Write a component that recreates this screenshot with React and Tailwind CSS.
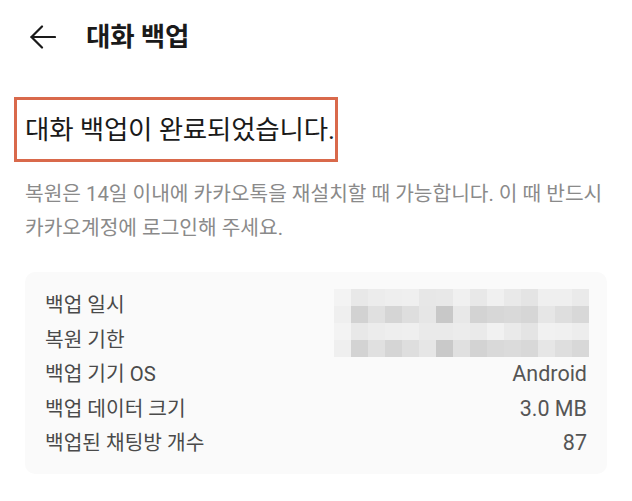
import React from 'react';

// 흐림 처리된 날짜 영역 (모자이크)
const MOSAIC = [
  ['#f3f3f3', '#e8e8e8', '#ececec', '#eeeeee', '#efefef', '#e7e7e7', '#e8e8e8', '#f0f0f0', '#e8e8e8', '#f0f0f0', '#e9e9e9', '#e4e4e4', '#efefef', '#efefef', '#eaeaea'],
  ['#efefef', '#d2d2d2', '#e0e0e0', '#d5d5d5', '#dedede', '#e6e6e6', '#c8c8c8', '#e8e8e8', '#d3d3d3', '#d7d7d7', '#d9d9d9', '#d6d6d6', '#e6e6e6', '#dedede', '#d8d8d8'],
  ['#f3f3f3', '#e8e8e8', '#ececec', '#eeeeee', '#efefef', '#eaeaea', '#eaeaea', '#ececec', '#eaeaea', '#f1f1f1', '#eaeaea', '#e4e4e4', '#f1f1f1', '#f0f0f0', '#ededed'],
  ['#efefef', '#d3d3d3', '#e0e0e0', '#d5d5d5', '#dedede', '#e6e6e6', '#c9c9c9', '#e0e0e0', '#d3d3d3', '#d9d9d9', '#dbdbdb', '#d8d8d8', '#e6e6e6', '#dedede', '#d8d8d8'],
];

const Mosaic = () => (
  <svg width="255" height="68" viewBox="0 0 255 68" className="block">
    {MOSAIC.map((row, r) =>
      row.map((c, i) => <rect key={`${r}-${i}`} x={i * 17} y={r * 17} width="17" height="17" fill={c} />)
    )}
  </svg>
);

const rows = [
  { label: '백업 기기 OS', value: 'Android' },
  { label: '백업 데이터 크기', value: '3.0 MB' },
  { label: '백업된 채팅방 개수', value: '87' },
];

export default function App() {
  return (
    <div className="w-[632px] h-[501px] bg-white overflow-hidden font-['Roboto','Noto_Sans_CJK_KR',sans-serif]">
      {/* 헤더 */}
      <div className="flex items-center h-[74px] pl-[30px]">
        <svg width="26" height="24" viewBox="0 0 26 24" fill="none" stroke="#1a1a1a" strokeWidth="2.2" strokeLinecap="round" strokeLinejoin="round">
          <path d="M1.5 12 H25" />
          <path d="M12 1.5 L1.5 12 L12 22.5" />
        </svg>
        <h1 className="ml-[30px] text-[26.5px] font-bold text-[#1a1a1a] tracking-[-0.2px]">대화 백업</h1>
      </div>

      {/* 완료 메시지 */}
      <div className="mt-[23px] ml-[14px] w-[324px] h-[65px] border-[3px] border-[#d9694b] flex items-center pl-[8px]">
        <p className="text-[26.5px] text-[#1a1a1a] whitespace-nowrap tracking-[-0.2px]">대화 백업이 완료되었습니다.</p>
      </div>

      <p className="mt-[15px] px-[25px] text-[20.3px] leading-[34px] text-[#8a8a8a] whitespace-nowrap">
        복원은 14일 이내에 카카오톡을 재설치할 때 가능합니다. 이 때 반드시
        <br />
        카카오계정에 로그인해 주세요.
      </p>

      {/* 백업 정보 */}
      <div className="mt-[27px] mx-[25px] rounded-[10px] bg-[#fafafa] px-[20px] pt-[16px] pb-[13px]">
        <div className="grid grid-cols-[1fr_auto] auto-rows-[34.5px] items-center text-[20.3px]">
          <span className="text-[#4a4a4a]">백업 일시</span>
          <div className="row-span-2 self-center justify-self-end mr-[-2px]">
            <Mosaic />
          </div>
          <span className="text-[#4a4a4a]">복원 기한</span>
          {rows.map((r) => (
            <React.Fragment key={r.label}>
              <span className="text-[#4a4a4a]">{r.label}</span>
              <span className="text-right text-[21.5px] text-[#555555]">{r.value}</span>
            </React.Fragment>
          ))}
        </div>
      </div>
    </div>
  );
}
